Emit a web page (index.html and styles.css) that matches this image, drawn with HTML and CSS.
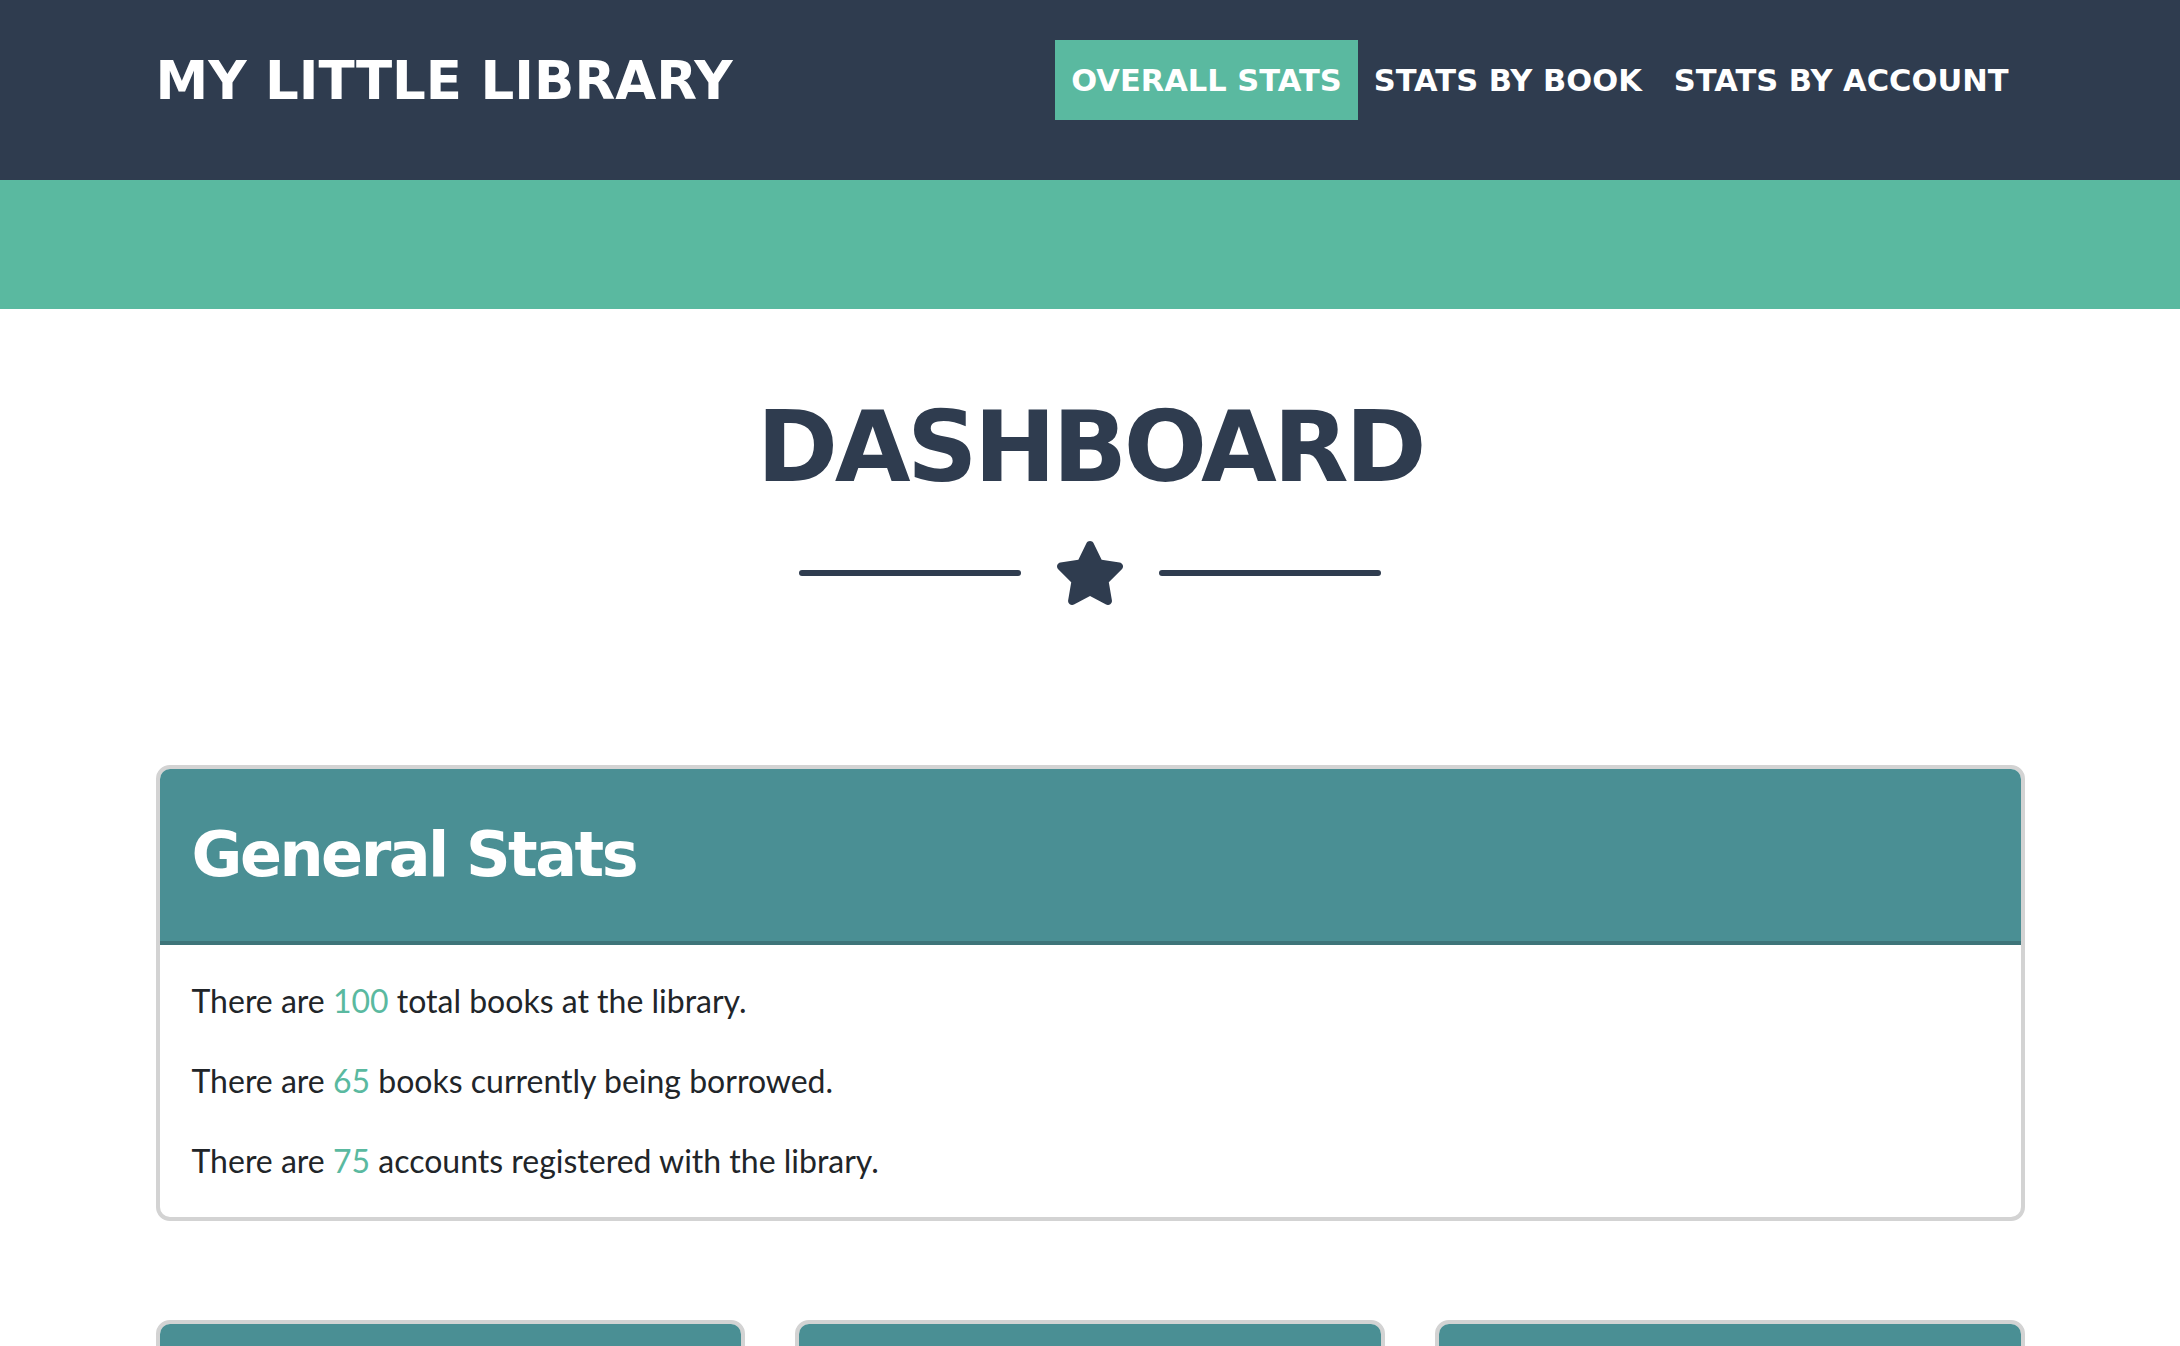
FILE: index.html
```html
<!DOCTYPE html>
<html lang="en">
<head>
<meta charset="utf-8">
<title>My Little Library</title>
<link rel="stylesheet" href="styles.css">
</head>
<body>
<header class="topbar">
  <div class="container topbar-inner">
    <a class="brand" href="#">MY LITTLE LIBRARY</a>
    <nav class="nav">
      <a class="nav-link active" href="#">OVERALL STATS</a>
      <a class="nav-link" href="#">STATS BY BOOK</a>
      <a class="nav-link" href="#">STATS BY ACCOUNT</a>
    </nav>
  </div>
</header>
<div class="band"></div>
<main class="container">
  <section class="page-title">
    <h1 class="page-heading">DASHBOARD</h1>
    <div class="divider">
      <span class="divider-line"></span>
      <svg class="divider-star" viewBox="0 0 576 512" width="72" height="64" aria-hidden="true"><path d="M316.9 18C311.6 7 300.4 0 288.1 0s-23.4 7-28.8 18L195 150.3 51.4 171.5c-12 1.8-22 10.2-25.7 21.7s-.7 24.2 7.9 32.7L137.8 329 113.2 474.7c-2 12 3 24.2 12.9 31.3s23 8 33.8 2.3l128.3-68.5 128.3 68.5c10.8 5.7 23.9 4.9 33.8-2.3s14.9-19.3 12.9-31.3L438.5 329 542.7 225.9c8.6-8.5 11.7-21.2 7.9-32.7s-13.7-19.9-25.7-21.7L381.2 150.3 316.9 18z"/></svg>
      <span class="divider-line"></span>
    </div>
  </section>

  <section class="card card-wide">
    <div class="card-header"><h2 class="card-title">General Stats</h2></div>
    <div class="card-body">
      <p>There are <span class="num">100</span> total books at the library.</p>
      <p>There are <span class="num">65</span> books currently being borrowed.</p>
      <p>There are <span class="num">75</span> accounts registered with the library.</p>
    </div>
  </section>

  <div class="card-grid">
    <section class="card card-small">
      <div class="card-header"></div>
      <div class="card-body card-body-empty"></div>
    </section>
    <section class="card card-small">
      <div class="card-header"></div>
      <div class="card-body card-body-empty"></div>
    </section>
    <section class="card card-small">
      <div class="card-header"></div>
      <div class="card-body card-body-empty"></div>
    </section>
  </div>
</main>
</body>
</html>
```
FILE: styles.css
```css
* { box-sizing: border-box; }

body {
  margin: 0;
  background: #ffffff;
  font-family: Lato, "Liberation Sans", sans-serif;
  color: #212529;
}

.container {
  width: 1869px;
  margin: 0 auto;
}

/* Top bar */
.topbar {
  background: #2f3c4f;
  padding: 40px 0 60px;
}
.topbar-inner {
  display: flex;
  align-items: center;
  justify-content: space-between;
  height: 80px;
}
.brand {
  font-family: "DejaVu Sans", sans-serif;
  font-weight: 700;
  font-size: 53px;
  line-height: 1;
  color: #ffffff;
  text-decoration: none;
}
.nav {
  display: flex;
  height: 80px;
}
.nav-link {
  display: flex;
  align-items: center;
  padding: 0 16px;
  font-family: "DejaVu Sans", sans-serif;
  font-weight: 700;
  font-size: 30.5px;
  color: #ffffff;
  text-decoration: none;
}
.nav-link.active {
  background: #5ab9a0;
}

.band {
  background: #5ab9a0;
  height: 129px;
}

/* Page title */
.page-title {
  display: flex;
  flex-direction: column;
  align-items: center;
  padding-top: 89px;
}
.page-heading {
  margin: 0;
  font-family: "DejaVu Sans", sans-serif;
  font-weight: 700;
  font-size: 98px;
  line-height: 1;
  letter-spacing: -3.5px;
  color: #2f3c4f;
}
.divider {
  display: flex;
  align-items: center;
  gap: 33px;
  margin-top: 45px;
}
.divider-line {
  width: 222px;
  height: 6px;
  border-radius: 3px;
  background: #2f3c4f;
}
.divider-star {
  display: block;
  fill: #2f3c4f;
}

/* Cards */
.card {
  border: 4px solid #d3d3d3;
  border-radius: 14px;
  overflow: hidden;
  background: #ffffff;
}
.card-wide {
  margin-top: 160px;
}
.card-header {
  background: #4a8f94;
  border-bottom: 4px solid #3e7479;
  height: 176px;
  display: flex;
  align-items: center;
  padding: 0 32px;
}
.card-title {
  margin: 0;
  font-family: "DejaVu Sans", sans-serif;
  font-weight: 700;
  font-size: 62px;
  line-height: 1;
  letter-spacing: -2.5px;
  color: #ffffff;
}
.card-body {
  display: flex;
  flex-direction: column;
  gap: 32px;
  padding: 32px 32px 32px;
}
.card-body p {
  margin: 0;
  font-size: 32px;
  line-height: 48px;
}
.card-body-empty {
  min-height: 200px;
}
.num {
  color: #5ab9a0;
}

.card-grid {
  display: grid;
  grid-template-columns: repeat(3, 1fr);
  gap: 50px;
  margin-top: 99px;
  margin-bottom: 80px;
}
```
